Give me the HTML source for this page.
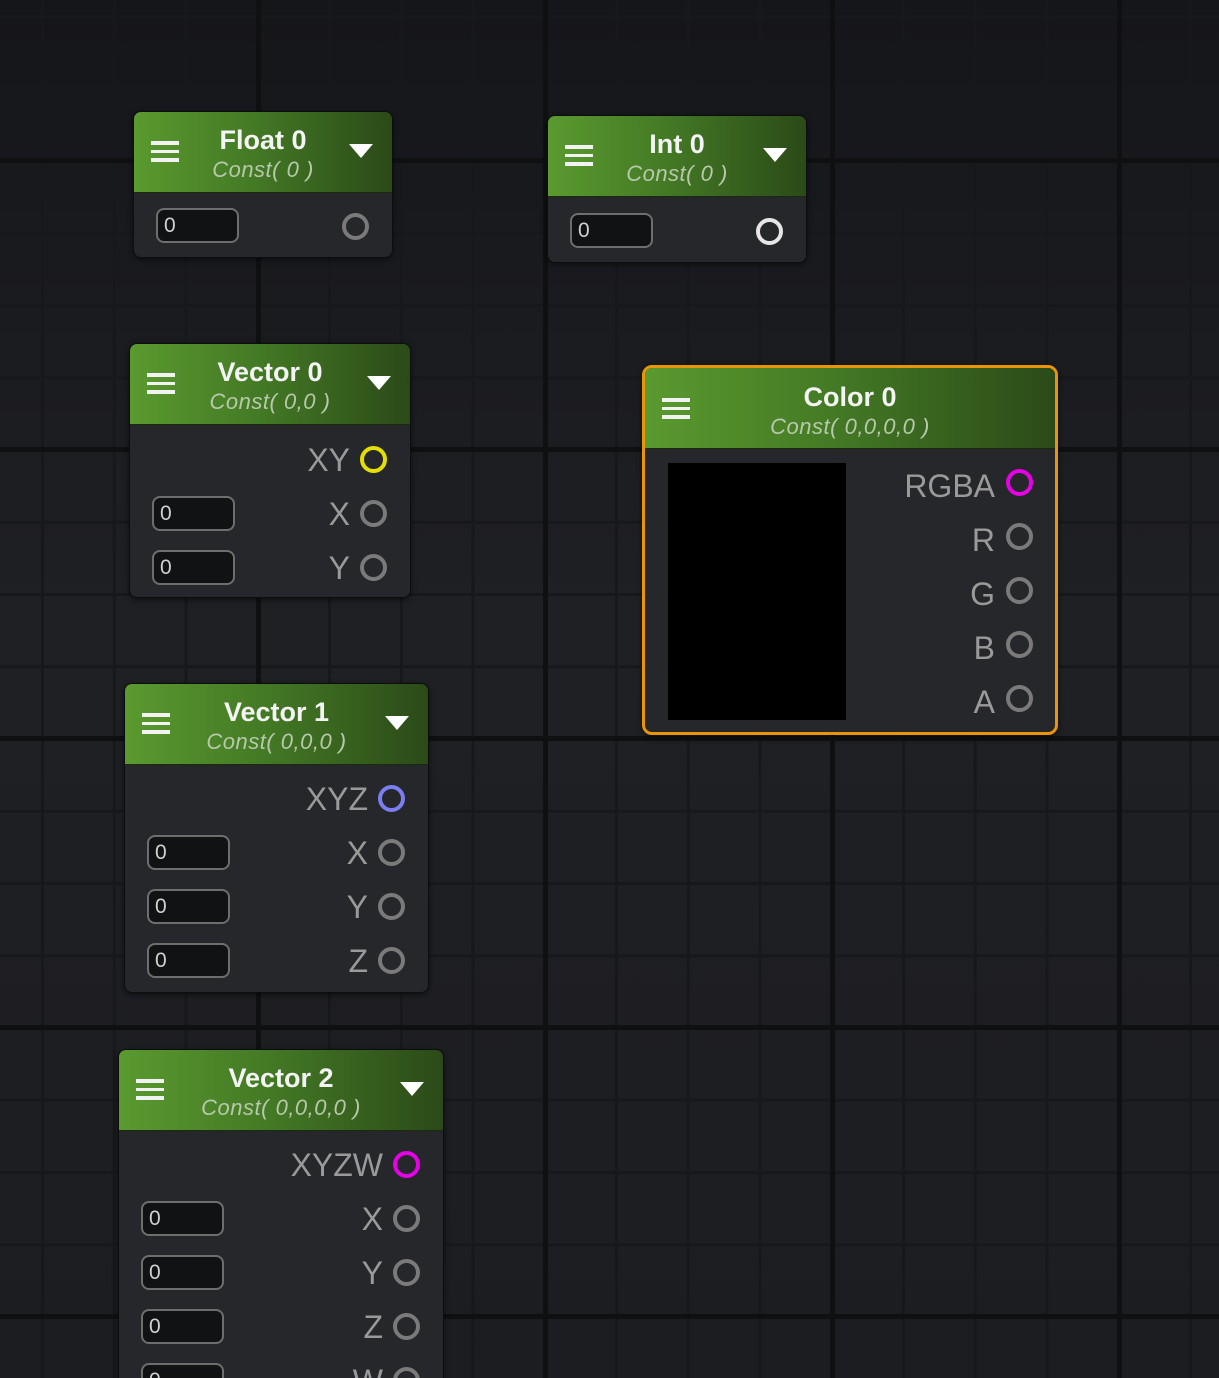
<!DOCTYPE html>
<html><head><meta charset="utf-8">
<style>
html,body{margin:0;padding:0;overflow:hidden;width:1219px;height:1378px}
body{position:relative;font-family:"Liberation Sans",sans-serif;
background-color:#1e1f23;
background-image:
linear-gradient(90deg,#0f1012 5px,transparent 5px),
linear-gradient(#0f1012 5px,transparent 5px),
linear-gradient(90deg,#17181b 3px,transparent 3px),
linear-gradient(#17181b 3px,transparent 3px),
linear-gradient(#15161a,#1f2024 45%,#1c1d21);
background-size:287px 100%,100% 289px,71.75px 100%,100% 72.25px,100% 100%;
background-position:256px 0,0 736px,41px 0,0 15px,0 0;
background-repeat:repeat,repeat,repeat,repeat,no-repeat;}
.node{position:absolute;background:#26272b;border:1.5px solid #0c0d0f;border-radius:8px;box-sizing:border-box;overflow:hidden;box-shadow:0 2px 6px rgba(0,0,0,.5)}
.hdr{position:absolute;left:0;top:0;right:0;height:80px;background:linear-gradient(90deg,#5a9a2f,#447a25 45%,#2b4a18);border-bottom:1.5px solid #1a2a10}
.ham{position:absolute;left:17px;top:29px;width:28px;height:22px}
.ham i{display:block;height:3.5px;background:#f2f2f2;margin-bottom:5px}
.t{position:absolute;left:0;right:0;text-align:center;color:#f4f4f4;font-size:27px;font-weight:bold;top:12px;line-height:32px}
.s{position:absolute;left:0;right:0;text-align:center;color:#b7c8ab;font-size:22px;font-style:italic;top:44px;line-height:28px;letter-spacing:.5px}
.tri{position:absolute;right:19px;top:32px;width:0;height:0;border-left:12px solid transparent;border-right:12px solid transparent;border-top:14px solid #fff}
.in{position:absolute;left:22px;width:83px;height:35px;box-sizing:border-box;border:2px solid #6e6e6e;border-radius:8px;background:#111214;color:#d0d0d0;font-size:21px;line-height:31px;padding-left:6px}
.lb{position:absolute;color:#9a9a9a;font-size:32px;line-height:36px;text-align:right}
.so{position:absolute;width:27px;height:27px;box-sizing:border-box;border:4.5px solid #7a7a7a;border-radius:50%}
</style></head><body>

<div class="node" style="left:133px;top:111px;width:260px;height:147px">
 <div class="hdr"><div class="ham"><i></i><i></i><i></i></div><div class="t">Float 0</div><div class="s">Const( 0 )</div><div class="tri"></div></div>
 <div class="in" style="top:96px">0</div>
 <div class="so" style="right:23px;top:101px"></div>
</div>

<div class="node" style="left:547px;top:115px;width:260px;height:148px">
 <div class="hdr"><div class="ham"><i></i><i></i><i></i></div><div class="t">Int 0</div><div class="s">Const( 0 )</div><div class="tri"></div></div>
 <div class="in" style="top:97px">0</div>
 <div class="so" style="right:23px;top:102px;border-color:#e6e6e6"></div>
</div>

<div class="node" style="left:129px;top:343px;width:282px;height:255px">
 <div class="hdr"><div class="ham"><i></i><i></i><i></i></div><div class="t">Vector 0</div><div class="s">Const( 0,0 )</div><div class="tri"></div></div>
 <div class="lb" style="right:60px;top:98px">XY</div><div class="so" style="right:23px;top:102px;border-color:#e3e000"></div>
 <div class="in" style="top:152px">0</div>
 <div class="lb" style="right:60px;top:152px">X</div><div class="so" style="right:23px;top:156px"></div>
 <div class="in" style="top:206px">0</div>
 <div class="lb" style="right:60px;top:206px">Y</div><div class="so" style="right:23px;top:210px"></div>
</div>

<div class="node" style="left:124px;top:683px;width:305px;height:310px">
 <div class="hdr"><div class="ham"><i></i><i></i><i></i></div><div class="t">Vector 1</div><div class="s">Const( 0,0,0 )</div><div class="tri"></div></div>
 <div class="lb" style="right:60px;top:97px">XYZ</div><div class="so" style="right:23px;top:101px;border-color:#7a7ef0"></div>
 <div class="in" style="top:151px">0</div>
 <div class="lb" style="right:60px;top:151px">X</div><div class="so" style="right:23px;top:155px"></div>
 <div class="in" style="top:205px">0</div>
 <div class="lb" style="right:60px;top:205px">Y</div><div class="so" style="right:23px;top:209px"></div>
 <div class="in" style="top:259px">0</div>
 <div class="lb" style="right:60px;top:259px">Z</div><div class="so" style="right:23px;top:263px"></div>
</div>

<div class="node" style="left:118px;top:1049px;width:326px;height:340px;border-bottom:none;border-radius:8px 8px 0 0">
 <div class="hdr"><div class="ham"><i></i><i></i><i></i></div><div class="t">Vector 2</div><div class="s">Const( 0,0,0,0 )</div><div class="tri"></div></div>
 <div class="lb" style="right:60px;top:97px">XYZW</div><div class="so" style="right:23px;top:101px;border-color:#e600e6"></div>
 <div class="in" style="top:151px">0</div>
 <div class="lb" style="right:60px;top:151px">X</div><div class="so" style="right:23px;top:155px"></div>
 <div class="in" style="top:205px">0</div>
 <div class="lb" style="right:60px;top:205px">Y</div><div class="so" style="right:23px;top:209px"></div>
 <div class="in" style="top:259px">0</div>
 <div class="lb" style="right:60px;top:259px">Z</div><div class="so" style="right:23px;top:263px"></div>
 <div class="in" style="top:313px">0</div>
 <div class="lb" style="right:60px;top:313px">W</div><div class="so" style="right:23px;top:317px"></div>
</div>

<div class="node" style="left:642px;top:365px;width:416px;height:370px;border:3.5px solid #e8950c;border-radius:10px">
 <div class="hdr" style="height:80px"><div class="ham" style="top:30px"><i></i><i></i><i></i></div><div class="t" style="top:13px">Color 0</div><div class="s" style="top:45px">Const( 0,0,0,0 )</div></div>
 <div style="position:absolute;left:23px;top:95px;width:178px;height:257px;background:#000"></div>
 <div class="lb" style="right:60px;top:100px">RGBA</div><div class="so" style="right:22px;top:101px;border-color:#e600e6"></div>
 <div class="lb" style="right:60px;top:154px">R</div><div class="so" style="right:22px;top:155px"></div>
 <div class="lb" style="right:60px;top:208px">G</div><div class="so" style="right:22px;top:209px"></div>
 <div class="lb" style="right:60px;top:262px">B</div><div class="so" style="right:22px;top:263px"></div>
 <div class="lb" style="right:60px;top:316px">A</div><div class="so" style="right:22px;top:317px"></div>
</div>

</body></html>
